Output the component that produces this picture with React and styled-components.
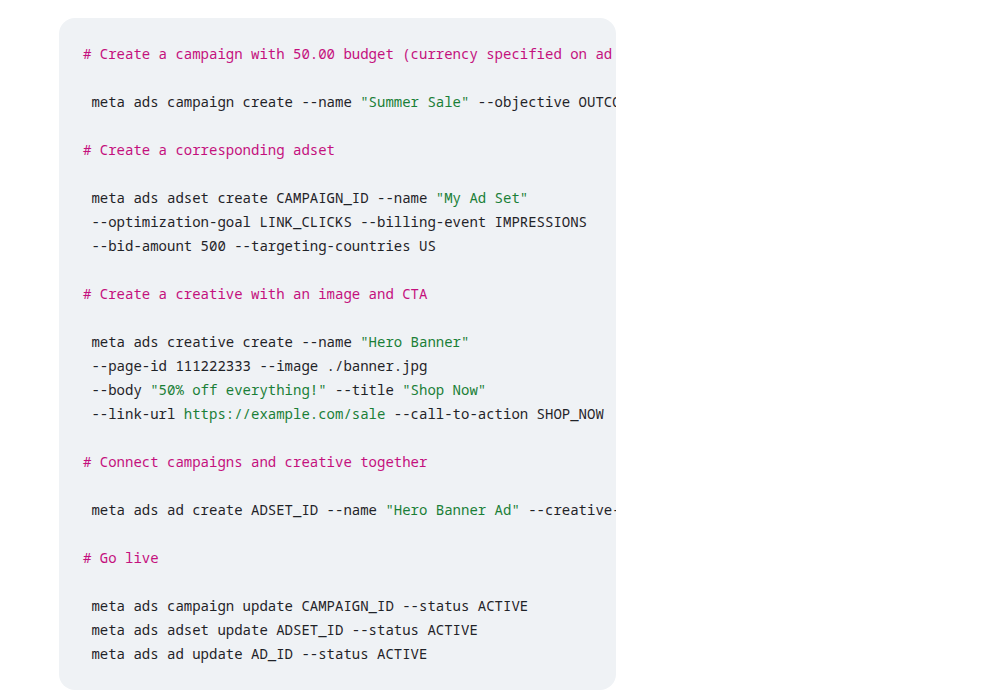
import React from "react";
import styled, { createGlobalStyle } from "styled-components";

const Global = createGlobalStyle`
  html, body { margin: 0; padding: 0; background: #ffffff; }
`;

const Page = styled.div`
  padding: 18px 0 10px 59px;
`;

const CodeBlock = styled.pre`
  box-sizing: border-box;
  width: 557px;
  margin: 0;
  padding: 24px 0 24px 24px;
  background: #eff2f5;
  border-radius: 16px;
  overflow: hidden;
  font-family: "Noto Sans Mono", "DejaVu Sans Mono", monospace;
  font-size: 14px;
  line-height: 24px;
  color: #1f2328;
  white-space: pre;
`;

const Line = styled.div`
  height: 24px;
`;

const Tok = styled.span`
  color: ${(p) =>
    p.$kind === "comment" ? "#c4107d" : p.$kind === "string" ? "#1a7f37" : "#1f2328"};
`;

const c = (t) => ({ k: "comment", t });
const s = (t) => ({ k: "string", t });
const p = (t) => ({ k: "plain", t });

const lines = [
  [c("# Create a campaign with 50.00 budget (currency specified on ad account)")],
  [],
  [p(" meta ads campaign create --name "), s('"Summer Sale"'), p(" --objective OUTCOME_SALES --daily-budget 5000")],
  [],
  [c("# Create a corresponding adset")],
  [],
  [p(" meta ads adset create CAMPAIGN_ID --name "), s('"My Ad Set"')],
  [p(" --optimization-goal LINK_CLICKS --billing-event IMPRESSIONS")],
  [p(" --bid-amount 500 --targeting-countries US")],
  [],
  [c("# Create a creative with an image and CTA")],
  [],
  [p(" meta ads creative create --name "), s('"Hero Banner"')],
  [p(" --page-id 111222333 --image ./banner.jpg")],
  [p(" --body "), s('"50% off everything!"'), p(" --title "), s('"Shop Now"')],
  [p(" --link-url "), s("https://example.com/sale"), p(" --call-to-action SHOP_NOW")],
  [],
  [c("# Connect campaigns and creative together")],
  [],
  [p(" meta ads ad create ADSET_ID --name "), s('"Hero Banner Ad"'), p(" --creative-id CREATIVE_ID")],
  [],
  [c("# Go live")],
  [],
  [p(" meta ads campaign update CAMPAIGN_ID --status ACTIVE")],
  [p(" meta ads adset update ADSET_ID --status ACTIVE")],
  [p(" meta ads ad update AD_ID --status ACTIVE")],
];

export default function App() {
  return (
    <>
      <Global />
      <Page>
        <CodeBlock>
          {lines.map((toks, i) => (
            <Line key={i}>
              {toks.map((tk, j) => (
                <Tok key={j} $kind={tk.k}>
                  {tk.t}
                </Tok>
              ))}
            </Line>
          ))}
        </CodeBlock>
      </Page>
    </>
  );
}
